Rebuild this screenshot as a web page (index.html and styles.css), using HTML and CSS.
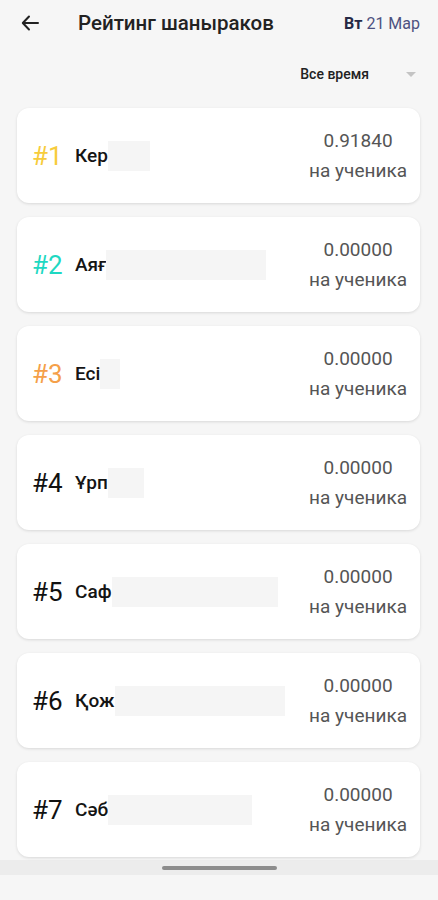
FILE: index.html
```html
<!DOCTYPE html>
<html lang="ru">
<head>
  <meta charset="utf-8">
  <title>Рейтинг шаныраков</title>
  <link rel="stylesheet" href="styles.css">
</head>
<body>
  <div class="app">
    <header class="topbar">
      <button class="back" aria-label="Назад">
        <svg width="18" height="16" viewBox="0 0 18 16"><path d="M8 1.5 1.8 8 8 14.5M2 8h15" fill="none" stroke="#222" stroke-width="2" stroke-linecap="round" stroke-linejoin="round"/></svg>
      </button>
      <h1 class="title">Рейтинг шаныраков</h1>
      <div class="date"><b>Вт</b> 21 Мар</div>
    </header>

    <div class="filter">
      <div class="select">
        <span>Все время</span>
        <span class="caret"></span>
      </div>
    </div>

    <ul class="list">
      <li class="card">
        <span class="rank gold">#1</span>
        <span class="name">Кер<i class="hide" style="width:42px"></i></span>
        <div class="score"><div>0.91840</div><div>на ученика</div></div>
      </li>
      <li class="card">
        <span class="rank teal">#2</span>
        <span class="name">Аяғ<i class="hide" style="width:160px"></i></span>
        <div class="score"><div>0.00000</div><div>на ученика</div></div>
      </li>
      <li class="card">
        <span class="rank orange">#3</span>
        <span class="name">Есі<i class="hide" style="width:20px"></i></span>
        <div class="score"><div>0.00000</div><div>на ученика</div></div>
      </li>
      <li class="card">
        <span class="rank">#4</span>
        <span class="name">Ұрп<i class="hide" style="width:36px"></i></span>
        <div class="score"><div>0.00000</div><div>на ученика</div></div>
      </li>
      <li class="card">
        <span class="rank">#5</span>
        <span class="name">Саф<i class="hide" style="width:166px"></i></span>
        <div class="score"><div>0.00000</div><div>на ученика</div></div>
      </li>
      <li class="card">
        <span class="rank">#6</span>
        <span class="name">Қож<i class="hide" style="width:170px"></i></span>
        <div class="score"><div>0.00000</div><div>на ученика</div></div>
      </li>
      <li class="card">
        <span class="rank">#7</span>
        <span class="name">Сəб<i class="hide" style="width:144px"></i></span>
        <div class="score"><div>0.00000</div><div>на ученика</div></div>
      </li>
    </ul>

    <div class="navbar"><span class="handle"></span></div>
  </div>
</body>
</html>
```

FILE: styles.css
```css
html, body {
  margin: 0;
  background: #f6f6f6;
}
body {
  font-family: Roboto, "Noto Sans", sans-serif;
  color: #1f1f1f;
}
.app {
  width: 438px;
}

.topbar {
  height: 46px;
  display: flex;
  align-items: center;
  padding: 0 18px 0 21px;
}
.back {
  border: 0;
  background: none;
  padding: 0;
  width: 18px;
  height: 16px;
  display: flex;
}
.title {
  margin: 0 0 0 39px;
  font-size: 20.5px;
  font-weight: 500;
  color: #222;
  flex: 1;
}
.date {
  font-size: 16px;
  color: #4d5180;
}
.date b {
  color: #262945;
  font-weight: 700;
}

.filter {
  display: flex;
  justify-content: flex-end;
  padding: 10px 22px 0 0;
  height: 52px;
  box-sizing: border-box;
}
.select {
  display: flex;
  align-items: center;
  height: 36px;
  font-size: 14px;
  font-weight: 500;
  color: #222;
}
.caret {
  margin-left: 37px;
  width: 0;
  height: 0;
  border-left: 5px solid transparent;
  border-right: 5px solid transparent;
  border-top: 5px solid #c4c4c4;
}

.list {
  list-style: none;
  margin: 10px 0 0;
  padding: 0 18px 0 17px;
  display: flex;
  flex-direction: column;
  gap: 14px;
}
.card {
  height: 95px;
  background: #fff;
  border-radius: 12px;
  box-shadow: 0 1px 3px rgba(0, 0, 0, 0.12);
  display: flex;
  align-items: center;
  padding: 0 13px 0 15px;
}
.rank {
  width: 43px;
  font-size: 26px;
  color: #111;
  flex-shrink: 0;
}
.rank.gold { color: #f7cc3c; }
.rank.teal { color: #1ed8c2; }
.rank.orange { color: #f5a049; }
.name {
  flex: 1;
  display: flex;
  align-items: center;
  font-size: 19px;
  font-weight: 500;
  color: #151515;
}
.hide {
  display: inline-block;
  height: 30px;
  background: #f5f5f5;
}
.score {
  text-align: center;
  font-size: 19px;
  line-height: 30px;
  color: #555;
}

.navbar {
  margin-top: 3px;
  height: 15px;
  background: #ececec;
  display: flex;
  justify-content: center;
  align-items: center;
}
.handle {
  width: 115px;
  height: 4px;
  border-radius: 2px;
  background: #8c8c8c;
}
```
